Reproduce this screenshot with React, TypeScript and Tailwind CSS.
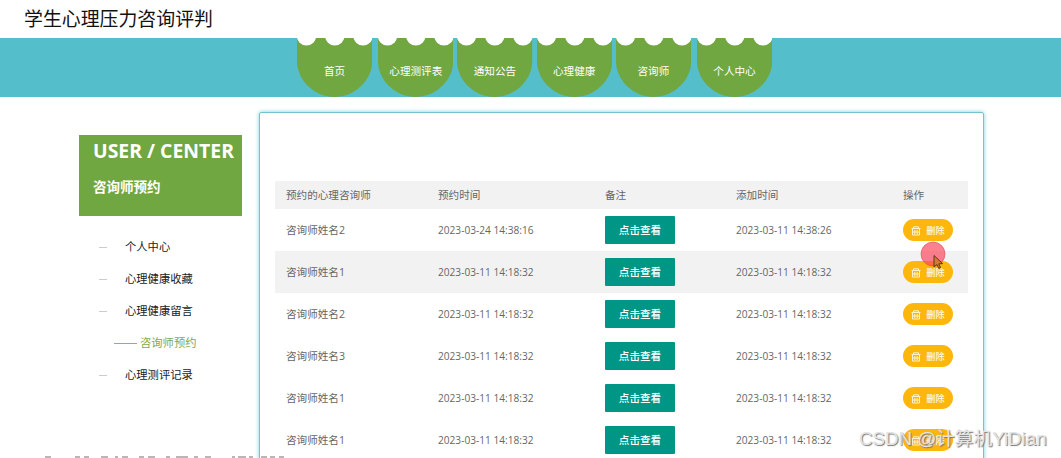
import { useState } from "react";

interface ICita {
  id: number;
  nombre: string;
  reserva: string;
  creado: string;
}

const NAV_ITEMS = [
  { label: "首页", margin: "" },
  { label: "心理测评表", margin: "ml-1.5" },
  { label: "通知公告", margin: "ml-1" },
  { label: "心理健康", margin: "ml-1" },
  { label: "咨询师", margin: "ml-1" },
  { label: "个人中心", margin: "ml-1.5" },
];

const MENU_ITEMS = [
  "个人中心",
  "心理健康收藏",
  "心理健康留言",
  "咨询师预约",
  "心理测评记录",
];

const CITAS: ICita[] = [
  { id: 1, nombre: "咨询师姓名2", reserva: "2023-03-24 14:38:16", creado: "2023-03-11 14:38:26" },
  { id: 2, nombre: "咨询师姓名1", reserva: "2023-03-11 14:18:32", creado: "2023-03-11 14:18:32" },
  { id: 3, nombre: "咨询师姓名2", reserva: "2023-03-11 14:18:32", creado: "2023-03-11 14:18:32" },
  { id: 4, nombre: "咨询师姓名3", reserva: "2023-03-11 14:18:32", creado: "2023-03-11 14:18:32" },
  { id: 5, nombre: "咨询师姓名1", reserva: "2023-03-11 14:18:32", creado: "2023-03-11 14:18:32" },
  { id: 6, nombre: "咨询师姓名1", reserva: "2023-03-11 14:18:32", creado: "2023-03-11 14:18:32" },
];

// bottom line of the page, only its upper edge is visible
const MARKS = [
  [3, 6], [33, 5], [42, 5], [59, 7], [73, 3], [80, 6], [97, 5], [106, 7],
  [124, 4], [134, 12], [152, 4], [163, 6], [190, 3], [196, 8], [207, 4],
  [219, 6], [228, 5], [237, 5],
];

const NavTab = ({ label, margin }: { label: string; margin: string }) => (
  <button className={`relative h-[59px] w-[75.2px] shrink-0 ${margin}`}>
    <svg className="absolute inset-0" width="75.2" height="59" viewBox="0 0 75.2 59">
      <path d="M0 0H75.2V23C75.2 43 57 59 37.6 59S0 43 0 23Z" fill="#71a741" />
      <g fill="#fff">
        <circle cx="9.5" cy="-2.2" r="9.7" />
        <circle cx="37.8" cy="-2.2" r="9.7" />
        <circle cx="66" cy="-2.2" r="9.7" />
      </g>
    </svg>
    <span className="relative block pt-[6px] text-[10.6px] leading-4 whitespace-nowrap text-white">
      {label}
    </span>
  </button>
);

const TrashIcon = () => (
  <svg width="10" height="10" viewBox="0 0 10 10" fill="none" stroke="#fff3cf" strokeWidth="1">
    <path d="M.5 2.5h9M2.5 2.3V.8h5v1.5M1.5 2.8v6.2h7V2.8M3.8 4v4M6.2 4v4M2 6h6" />
  </svg>
);

const Fila = ({ cita, striped }: { cita: ICita; striped: boolean }) => (
  <div
    className={`grid h-[42px] grid-cols-[152px_167px_131px_167px_1fr] items-center pl-[11px] ${
      striped ? "bg-[#f2f2f3]" : ""
    }`}
  >
    <p className="pt-[2px]">{cita.nombre}</p>
    <p className="pt-[2px] text-[10.15px]">{cita.reserva}</p>
    <button className="h-[28px] w-[70px] rounded-[1px] bg-[#009685] pt-px text-[10.6px] font-medium text-white">
      点击查看
    </button>
    <p className="pt-[2px] text-[10.15px]">{cita.creado}</p>
    <button className="flex h-[22px] w-[50px] items-center justify-center gap-[5px] rounded-full bg-[#fdb60b] pt-px text-[9.2px] font-medium text-[#fffbe8]">
      <TrashIcon />
      删除
    </button>
  </div>
);

const App = () => {
  const [selected, setSelected] = useState("咨询师预约");

  return (
    <div className="relative h-[458px] w-[1061px] overflow-hidden bg-white font-['Open_Sans','Noto_Sans_CJK_SC',sans-serif]">
      <header className="flex h-[38px] items-center pl-6">
        <h1 className="text-[18.9px] leading-none text-[#111]">学生心理压力咨询评判</h1>
      </header>

      <nav className="flex h-[59px] bg-[#55becb] pl-[297px]">
        {NAV_ITEMS.map((item) => (
          <NavTab key={item.label} label={item.label} margin={item.margin} />
        ))}
      </nav>

      <main className="flex items-start">
        <aside className="mt-[38px] ml-[78.5px] w-[163px] shrink-0">
          <div className="h-[81px] bg-[#71a741] pl-[14.5px] text-white">
            <h2 className="pt-[3px] text-[19.4px] leading-[26px] font-bold whitespace-nowrap">
              USER / CENTER
            </h2>
            <h3 className="pt-[13px] text-[13.5px] leading-5 font-bold">咨询师预约</h3>
          </div>

          <ul className="pt-[15px] pl-5">
            {MENU_ITEMS.map((item) => (
              <li
                key={item}
                className="flex h-8 cursor-pointer items-center text-[11.3px] whitespace-nowrap"
                onClick={() => setSelected(item)}
              >
                {selected === item ? (
                  <>
                    <span className="mr-[3px] ml-[15.5px] h-px w-[23px] bg-[#8fb568]" />
                    <span className="text-[#7cab4f]">{item}</span>
                  </>
                ) : (
                  <>
                    <span className="mr-[18.5px] h-px w-2 bg-[#ccc]" />
                    <span className="text-[#222]">{item}</span>
                  </>
                )}
              </li>
            ))}
          </ul>
        </aside>

        <section className="mt-[15px] ml-[17.5px] h-[400px] w-[724.5px] shrink-0 rounded-[2px] border border-[#74c4cf] px-[15px] pt-[68px] text-[10.6px] text-[#666] shadow-[0_0_4px_#7bd0dc]">
          <div className="grid h-[28px] grid-cols-[152px_167px_131px_167px_1fr] items-center bg-[#f2f2f3] pt-px pl-[11px]">
            <p>预约的心理咨询师</p>
            <p>预约时间</p>
            <p>备注</p>
            <p>添加时间</p>
            <p>操作</p>
          </div>
          {CITAS.map((cita, index) => (
            <Fila key={cita.id} cita={cita} striped={index === 1} />
          ))}
        </section>
      </main>

      {/* pointer */}
      <svg className="absolute top-[241px] left-[920px]" width="28" height="30" viewBox="0 0 28 30">
        <circle cx="13" cy="13" r="12" fill="#fa4b5d" fillOpacity=".7" stroke="#e04a58" strokeWidth=".6" />
        <path
          d="M14 14.5V26l2.9-2.4 1.9 3.9 1.8-.9-1.8-3.7 3.8-.3Z"
          fill="#d9772a"
          stroke="#5b3a12"
          strokeWidth="1"
        />
      </svg>

      <p className="absolute top-[427px] left-[859px] font-['Liberation_Sans','Noto_Sans_CJK_SC',sans-serif] text-[18.7px] leading-6 whitespace-nowrap text-[#e4e4e4] [text-shadow:1px_1px_1px_#777]">
        CSDN @计算机YiDian
      </p>

      <svg className="absolute bottom-0 left-[42px]" width="245" height="2" viewBox="0 0 245 2">
        {MARKS.map(([x, w]) => (
          <rect key={x} x={x} y="0" width={w} height="2" fill="#999" fillOpacity=".7" />
        ))}
      </svg>
    </div>
  );
};

export default App;
